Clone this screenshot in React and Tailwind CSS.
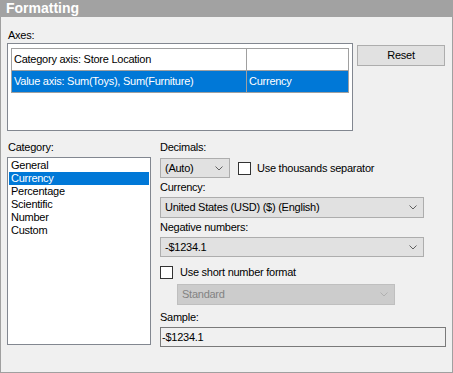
import React from 'react';

const Chevron = ({ color = '#606060' }) => (
  <svg width="8" height="5" viewBox="0 0 8 5">
    <polyline points="0.5,0.5 4,4 7.5,0.5" fill="none" stroke={color} strokeWidth="1" />
  </svg>
);

function Select({ value, className = '', disabled = false }) {
  return (
    <div
      className={`flex items-center justify-between pl-[4px] pr-[6px] border ${
        disabled ? 'bg-[#cccccc] border-[#bfbfbf] text-[#838383]' : 'bg-[#e1e1e1] border-[#adadad] text-black'
      } ${className}`}
    >
      <span>{value}</span>
      <Chevron color={disabled ? '#b0b0b0' : '#606060'} />
    </div>
  );
}

const Checkbox = () => <div className="w-[13px] h-[13px] border border-[#333333] bg-white shrink-0" />;

export default function App() {
  const categories = ['General', 'Currency', 'Percentage', 'Scientific', 'Number', 'Custom'];

  return (
    <div className="w-[453px] h-[373px] flex flex-col font-['Liberation_Sans',Arial,sans-serif] text-[11px] leading-[13px] tracking-[-0.25px] text-black">
      {/* title */}
      <div className="h-[17px] bg-[#a2a2a2] text-white font-bold text-[14px] leading-[17px] pl-[6px] tracking-normal">
        Formatting
      </div>

      <div className="flex-1 bg-[#f0f0f0] border-x border-b border-[#a0a0a0] pl-[6px] pt-[12px]">
        <div className="h-[13px] pl-[1px]">Axes:</div>
        <div className="flex mt-[1px]">
          <div className="w-[346px] h-[88px] border border-[#828790] bg-white pt-[4px] pl-[3px]">
            <div className="w-[338px] border border-[#a0a0a0]">
              <div className="flex h-[22px] border-b border-[#a0a0a0]">
                <div className="w-[235px] border-r border-[#a0a0a0] pl-[2px] leading-[21px]">Category axis: Store Location</div>
                <div className="flex-1" />
              </div>
              <div className="flex h-[21px] bg-[#0078d7] text-white">
                <div className="w-[235px] border-r border-[#a0a0a0] pl-[2px] leading-[21px]">Value axis: Sum(Toys), Sum(Furniture)</div>
                <div className="flex-1 pl-[2px] leading-[21px]">Currency</div>
              </div>
            </div>
          </div>
          <div className="ml-[4px] mt-[2px] w-[88px] h-[21px] bg-[#e1e1e1] border border-[#adadad] flex items-center justify-center">
            Reset
          </div>
        </div>

        <div className="flex mt-[10px]">
          <div className="w-[144px]">
            <div className="h-[13px] pl-[1px]">Category:</div>
            <div className="mt-[3px] h-[188px] border border-[#828790] bg-white p-[1px]">
              {categories.map((c) => (
                <div
                  key={c}
                  className={`h-[13px] pl-[2px] ${c === 'Currency' ? 'bg-[#0078d7] text-white' : ''}`}
                >
                  {c}
                </div>
              ))}
            </div>
          </div>

          <div className="ml-[9px] flex flex-col">
            <div className="h-[13px]">Decimals:</div>
            <div className="flex items-center mt-[4px]">
              <Select value="(Auto)" className="w-[70px] h-[20px]" />
              <div className="ml-[8px]">
                <Checkbox />
              </div>
              <span className="ml-[6px]">Use thousands separator</span>
            </div>

            <div className="h-[13px] mt-[3px]">Currency:</div>
            <Select value="United States (USD) ($) (English)" className="w-[264px] h-[21px] mt-[3px]" />

            <div className="h-[13px] mt-[3px]">Negative numbers:</div>
            <Select value="-$1234.1" className="w-[264px] h-[20px] mt-[3px]" />

            <div className="flex items-center mt-[9px] h-[13px]">
              <Checkbox />
              <span className="ml-[7px]">Use short number format</span>
            </div>
            <Select value="Standard" disabled className="w-[218px] h-[21px] mt-[5px] ml-[17px]" />

            <div className="h-[13px] mt-[6px]">Sample:</div>
            <div className="mt-[3px] w-[286px] h-[20px] border border-[#7a7a7a] bg-[#f0f0f0] pl-[1px] leading-[18px]">
              -$1234.1
            </div>
          </div>
        </div>
      </div>
    </div>
  );
}
